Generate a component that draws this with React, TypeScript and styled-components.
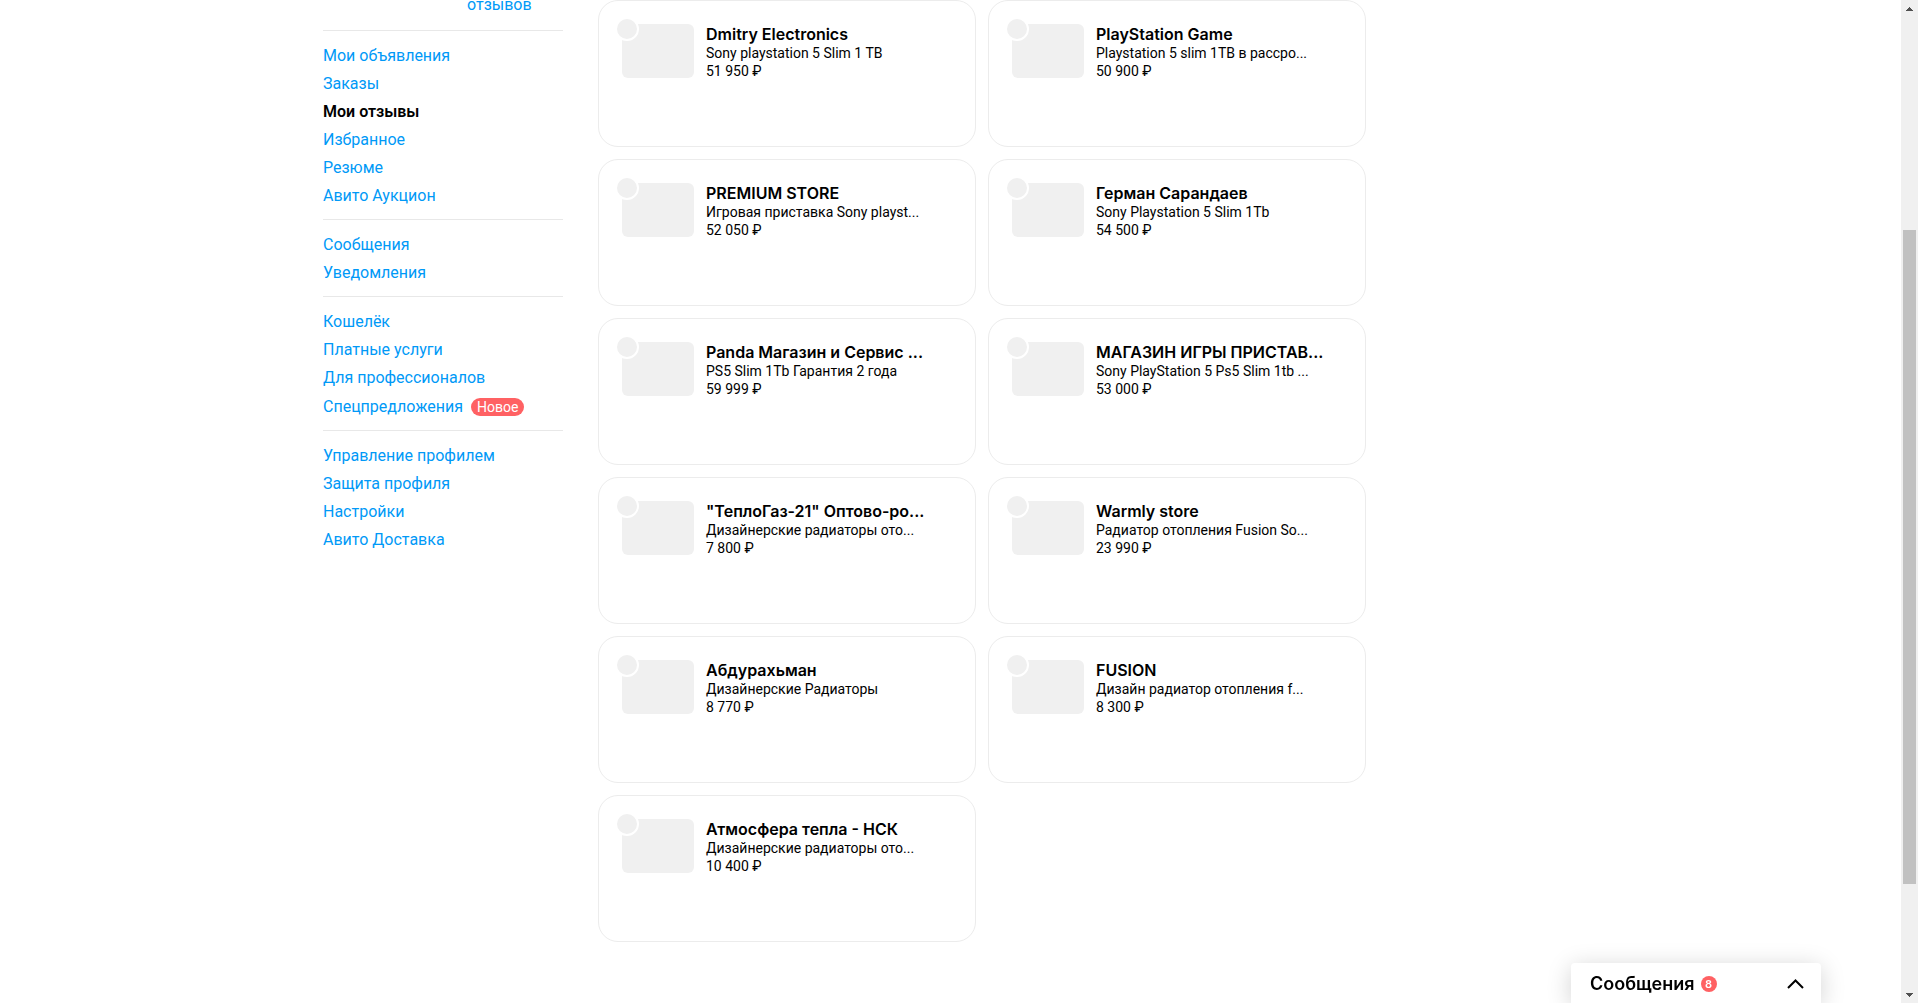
import React from 'react';
import styled, { createGlobalStyle } from 'styled-components';

const GlobalStyle = createGlobalStyle`
  * { box-sizing: border-box; }
  html, body { margin: 0; }
  body {
    background: #fff;
    color: #000;
    font-family: Roboto, Inter, "Noto Sans", sans-serif;
    font-size: 16px;
    line-height: 20px;
    overflow: hidden;
  }
`;

const Screen = styled.div`
  display: grid;
  grid-template-columns: minmax(0, 1fr) 17px;
  height: 100vh;
  overflow: hidden;
`;

const Page = styled.div`
  display: flex;
  align-items: flex-start;
  gap: 35px;
  width: 100%;
  max-width: 1255px;
  margin: 0 auto;
`;

const Sidebar = styled.aside`
  flex: 0 0 240px;
`;

const Rating = styled.div`
  height: 30px;
  padding-left: 144px;
  line-height: 10px;
`;

const Group = styled.ul`
  list-style: none;
  margin: 0;
  padding: 10px 0;
  border-top: 1px solid #e8e8e8;
`;

const Item = styled.li<{ $tall?: boolean }>`
  display: flex;
  align-items: flex-end;
  gap: 8px;
  height: ${p => (p.$tall ? 29 : 28)}px;
  padding-bottom: 3px;
`;

const Link = styled.a<{ $active?: boolean }>`
  color: ${p => (p.$active ? '#000' : '#0099f7')};
  font-weight: ${p => (p.$active ? 600 : 400)};
  text-decoration: none;
`;

const NewBadge = styled.span`
  margin-bottom: 1px;
  padding: 0 6px;
  border-radius: 9px;
  background: #ff6163;
  color: #fff;
  font-size: 14px;
  line-height: 18px;
`;

const Offers = styled.main`
  flex: 0 1 768px;
  display: grid;
  grid-template-columns: repeat(2, minmax(0, 1fr));
  gap: 12px;
`;

const Card = styled.article`
  display: flex;
  gap: 12px;
  min-height: 147px;
  padding: 23px;
  border: 1px solid #ececec;
  border-radius: 20px;
`;

const Photo = styled.div`
  position: relative;
  flex: 0 0 72px;
  height: 54px;
  border-radius: 6px;
  background: #f0f0f0;
`;

const Avatar = styled.span`
  position: absolute;
  top: -7px;
  left: -7px;
  width: 24px;
  height: 24px;
  border: 2px solid #fff;
  border-radius: 50%;
  background: #f0f0f0;
`;

const Info = styled.div`
  min-width: 0;
  white-space: nowrap;
`;

const Seller = styled.h2`
  margin: 0;
  font-family: Inter, "Noto Sans", Roboto, sans-serif;
  font-size: 16px;
  line-height: 20px;
  font-weight: 600;
`;

const Line = styled.p`
  margin: 0;
  font-size: 14px;
  line-height: 18px;
`;

const Chat = styled.button`
  position: fixed;
  right: 97px;
  bottom: 0;
  display: flex;
  align-items: center;
  gap: 6px;
  width: 250px;
  height: 40px;
  padding: 1px 17px 0 19px;
  border: 0;
  border-radius: 4px 4px 0 0;
  background: #fff;
  box-shadow: 0 4px 24px rgba(0, 0, 0, 0.18);
  color: #000;
  font: 600 18px/24px Inter, "Noto Sans", Roboto, sans-serif;
`;

const Count = styled.span`
  width: 16px;
  border-radius: 8px;
  background: #ff6163;
  color: #fff;
  font-size: 11px;
  line-height: 16px;
  text-align: center;
`;

const Chevron = styled.svg`
  margin-left: auto;
`;

const Scrollbar = styled.div`
  display: grid;
  grid-template-rows: 17px 213fr 654fr 102fr 17px;
  height: 100vh;
  background: #f0f0f0;
`;

const Thumb = styled.div`
  grid-row: 3;
  margin: 0 2px;
  background: #c1c1c1;
`;

const Arrow = styled.button<{ $row: number }>`
  grid-row: ${p => p.$row};
  display: flex;
  align-items: center;
  justify-content: center;
  padding: 0;
  border: 0;
  background: transparent;
`;

type Entry = { text: string; active?: boolean; badge?: string };

const groups: Entry[][] = [
  [
    { text: 'Мои объявления' },
    { text: 'Заказы' },
    { text: 'Мои отзывы', active: true },
    { text: 'Избранное' },
    { text: 'Резюме' },
    { text: 'Авито Аукцион' },
  ],
  [{ text: 'Сообщения' }, { text: 'Уведомления' }],
  [
    { text: 'Кошелёк' },
    { text: 'Платные услуги' },
    { text: 'Для профессионалов' },
    { text: 'Спецпредложения', badge: 'Новое' },
  ],
  [
    { text: 'Управление профилем' },
    { text: 'Защита профиля' },
    { text: 'Настройки' },
    { text: 'Авито Доставка' },
  ],
];

const offers = [
  ['Dmitry Electronics', 'Sony playstation 5 Slim 1 TB', '51 950 ₽'],
  ['PlayStation Game', 'Playstation 5 slim 1TB в рассро...', '50 900 ₽'],
  ['PREMIUM STORE', 'Игровая приставка Sony playst...', '52 050 ₽'],
  ['Герман Сарандаев', 'Sony Playstation 5 Slim 1Tb', '54 500 ₽'],
  ['Panda Магазин и Сервис ...', 'PS5 Slim 1Tb Гарантия 2 года', '59 999 ₽'],
  ['МАГАЗИН ИГРЫ ПРИСТАВ...', 'Sony PlayStation 5 Ps5 Slim 1tb ...', '53 000 ₽'],
  ['"ТеплоГаз-21" Оптово-ро...', 'Дизайнерские радиаторы ото...', '7 800 ₽'],
  ['Warmly store', 'Радиатор отопления Fusion So...', '23 990 ₽'],
  ['Абдурахьман', 'Дизайнерские Радиаторы', '8 770 ₽'],
  ['FUSION', 'Дизайн радиатор отопления f...', '8 300 ₽'],
  ['Атмосфера тепла - НСК', 'Дизайнерские радиаторы ото...', '10 400 ₽'],
];

export default function App() {
  return (
    <>
      <GlobalStyle />
      <Screen>
        <Page>
          <Sidebar>
            <Rating>
              <Link href="#reviews">отзывов</Link>
            </Rating>
            <nav>
              {groups.map((group, i) => (
                <Group key={i}>
                  {group.map(item => (
                    <Item key={item.text} $tall={Boolean(item.badge)}>
                      <Link href="#" $active={item.active}>{item.text}</Link>
                      {item.badge && <NewBadge>{item.badge}</NewBadge>}
                    </Item>
                  ))}
                </Group>
              ))}
            </nav>
          </Sidebar>
          <Offers>
            {offers.map(([seller, title, price]) => (
              <Card key={seller}>
                <Photo>
                  <Avatar />
                </Photo>
                <Info>
                  <Seller>{seller}</Seller>
                  <Line>{title}</Line>
                  <Line>{price}</Line>
                </Info>
              </Card>
            ))}
          </Offers>
        </Page>
        <Scrollbar>
          <Arrow $row={1} aria-label="Вверх">
            <svg width="7" height="4" viewBox="0 0 7 4" shapeRendering="crispEdges">
              <path d="M3 0h1v1h1v1h1v1h1v1H0V3h1V2h1V1h1z" fill="#505050" />
            </svg>
          </Arrow>
          <Thumb />
          <Arrow $row={5} aria-label="Вниз">
            <svg width="7" height="4" viewBox="0 0 7 4" shapeRendering="crispEdges">
              <path d="M0 0h7v1H6v1H5v1H4v1H3V3H2V2H1V1H0z" fill="#505050" />
            </svg>
          </Arrow>
        </Scrollbar>
      </Screen>
      <Chat>
        Сообщения
        <Count>8</Count>
        <Chevron width="17" height="10" viewBox="0 0 17 10" fill="none">
          <path d="M1 9L8.500 1.500L16 9" stroke="#000" strokeWidth="2" />
        </Chevron>
      </Chat>
    </>
  );
}
